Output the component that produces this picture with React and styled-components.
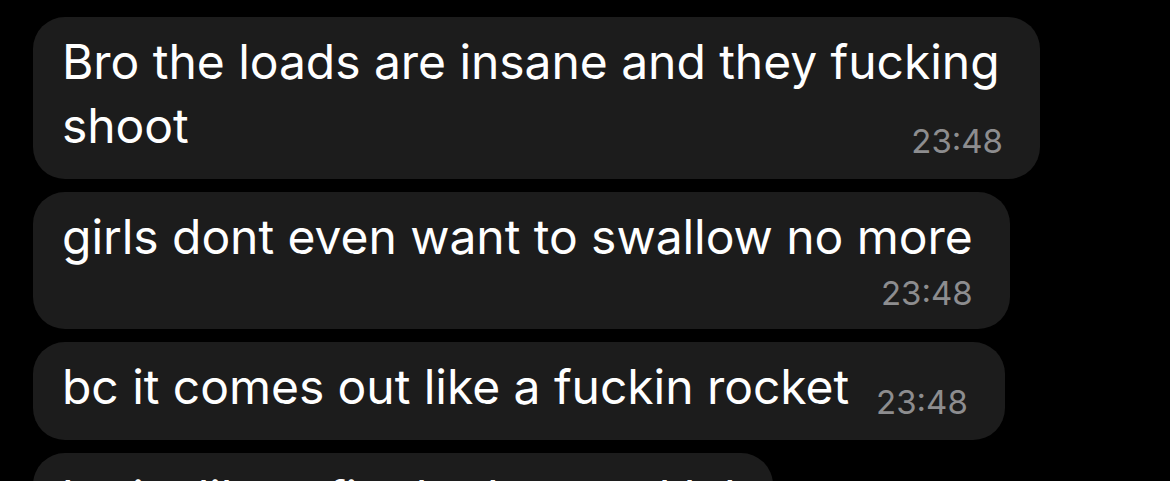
import React from "react";
import styled, { createGlobalStyle } from "styled-components";

const GlobalStyle = createGlobalStyle`
  html, body {
    margin: 0;
    padding: 0;
    background: #000;
    overflow: hidden;
  }
  body {
    font-family: Inter, "Noto Sans", sans-serif;
    -webkit-font-smoothing: antialiased;
  }
`;

const messages = [
  { text: "Bro the loads are insane and they fucking shoot", time: "23:48" },
  { text: "girls dont even want to swallow no more", time: "23:48", stacked: true },
  { text: "bc it comes out like a fuckin rocket", time: "23:48" },
  { text: "bc its like a fire hydrant ngl lol", time: "23:48", stacked: true },
];

function App() {
  return (
    <>
      <GlobalStyle />
      <Chat>
        {messages.map((m, i) => (
          <Bubble key={i}>
            <Text>
              {m.text}
              <Time $stacked={m.stacked}>{m.time}</Time>
            </Text>
          </Bubble>
        ))}
      </Chat>
    </>
  );
}

const Chat = styled.div`
  display: flex;
  flex-direction: column;
  align-items: flex-start;
  gap: 13px;
  padding: 17px 0 0 33px;
  height: 481px;
  box-sizing: border-box;
`;

const Bubble = styled.div`
  display: flow-root;
  box-sizing: border-box;
  max-width: 1007px;
  padding: 13px 37px 20px 29px;
  background: #1c1c1c;
  border-radius: 32px;
  flex-shrink: 0;
`;

const Text = styled.div`
  color: #fff;
  font-size: 48px;
  line-height: 64px;
  letter-spacing: -0.05px;
`;

const Time = styled.span`
  color: #8d8d8f;
  font-size: 33px;
  letter-spacing: 0;
  ${(p) =>
    p.$stacked
      ? `
    display: block;
    text-align: right;
    line-height: 32px;
    margin-top: 8px;
  `
      : `
    float: right;
    line-height: 36px;
    margin: 29px 0 0 27px;
  `}
`;

export default App;
